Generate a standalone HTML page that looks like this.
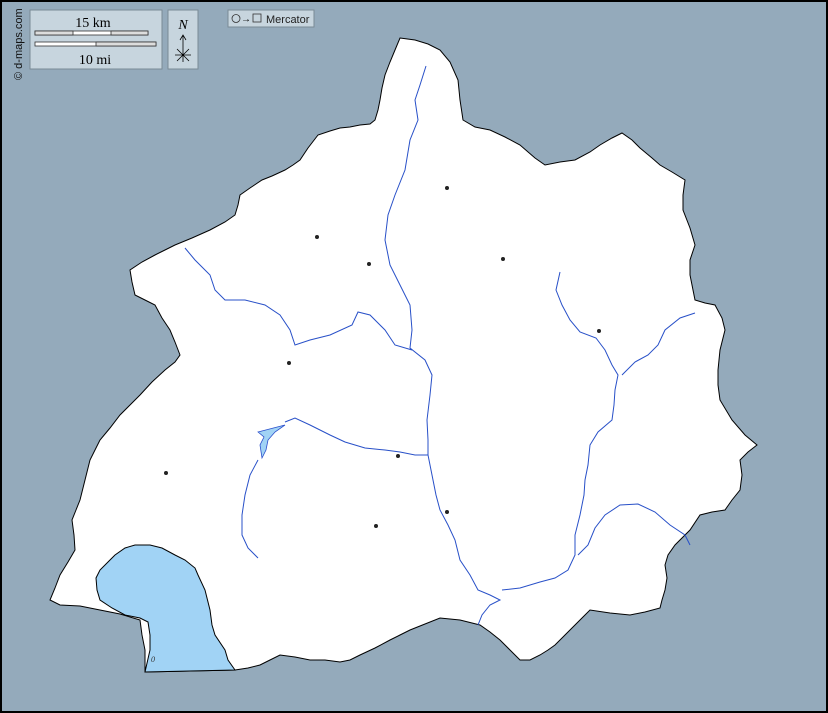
<!DOCTYPE html>
<html><head><style>
html,body{margin:0;padding:0;width:828px;height:713px;overflow:hidden;background:#94aabb}
svg{display:block}
text{font-family:"Liberation Serif",serif}
</style></head><body>
<svg width="828" height="713" viewBox="0 0 828 713">
<rect x="1" y="1" width="826" height="711" fill="#94aabb" stroke="#000" stroke-width="2"/>
<polygon fill="#fff" stroke="#000" stroke-width="1" points="400,38 415,40 428,44 440,50 450,62 458,80 460,100 463,120 475,127 490,130 505,137 520,145 535,158 545,165 560,162 575,160 590,152 600,145 612,138 622,133 632,140 640,148 652,158 660,165 672,172 685,180 683,195 683,210 690,228 695,245 690,260 690,275 693,290 695,300 705,303 715,305 722,318 725,330 720,350 718,370 718,385 720,400 732,420 745,435 757,445 748,452 740,460 742,475 740,490 732,500 725,510 712,512 700,515 690,530 675,545 668,555 665,565 667,578 665,590 662,600 660,608 645,612 630,615 610,613 590,610 582,618 575,625 565,635 555,645 548,650 540,655 530,660 520,660 510,650 500,640 490,632 480,625 460,620 440,618 425,624 410,630 400,635 390,640 375,648 360,655 350,660 340,662 325,660 310,660 295,657 280,655 270,660 260,665 248,668 235,670 145,672 145,650 142,635 140,620 120,614 100,610 80,606 60,605 50,600 55,588 60,575 68,562 75,550 74,535 72,520 76,510 80,500 85,480 90,460 95,450 100,440 110,428 120,415 130,405 140,395 152,382 165,370 175,362 180,355 175,342 170,330 162,318 155,305 145,300 135,295 132,282 130,270 142,262 155,255 165,250 175,245 192,238 210,230 225,222 235,215 238,205 240,195 250,188 262,180 272,176 285,170 293,165 300,160 308,148 318,135 330,131 340,128 350,127 360,125 370,124 375,120 378,110 380,100 382,88 385,75 390,62 395,50"/>
<polygon fill="#a1d3f5" stroke="#000" stroke-width="1" points="145,672 235,670 228,660 225,650 215,635 212,625 210,610 205,590 198,575 195,568 185,560 175,555 162,548 150,545 135,545 125,548 115,555 110,560 100,570 96,578 97,590 100,600 112,608 125,615 140,618 148,622 150,635 150,650"/>
<polygon fill="#a1d3f5" stroke="#2a4fcc" stroke-width="0.8" points="258,432 285,425 275,432 268,440 266,450 262,458 260,445 264,437"/>
<g fill="none" stroke="#2850c8" stroke-width="1">
<path d="M426,66 L420,85 L415,100 L418,120 L410,140 L405,170 L395,195 L388,215 L385,240 L390,265 L400,285 L410,305 L412,330 L410,348 L425,360 L432,375 L430,395 L427,420 L428,440 L428,455 L432,475 L436,495 L440,510 L448,525 L455,540 L460,560 L470,575 L478,590 L490,595 L500,600 L490,605 L482,615 L478,625"/>
<path d="M185,248 L195,260 L210,275 L215,290 L225,300 L245,300 L265,305 L280,315 L290,330 L295,345 L310,340 L330,335 L352,325 L358,312 L370,315 L385,330 L395,345 L412,350"/>
<path d="M285,422 L295,418 L310,425 L330,435 L345,442 L365,448 L385,450 L400,452 L415,455 L428,455"/>
<path d="M258,460 L250,475 L245,495 L242,515 L242,535 L248,548 L258,558"/>
<path d="M560,272 L556,290 L562,305 L570,320 L580,332 L596,338 L605,350 L612,365 L618,375 L615,390 L614,405 L612,420 L598,432 L590,445 L588,465 L585,480 L584,495 L580,515 L575,535 L575,555 L568,570 L555,578 L540,582 L520,588 L502,590"/>
<path d="M695,313 L680,318 L665,330 L658,345 L648,355 L635,362 L622,375"/>
<path d="M690,545 L685,535 L670,525 L655,512 L638,504 L620,505 L605,515 L595,528 L588,545 L578,555"/>
</g>
<g fill="#222">
<circle cx="447" cy="188" r="2"/><circle cx="317" cy="237" r="2"/><circle cx="369" cy="264" r="2"/>
<circle cx="503" cy="259" r="2"/><circle cx="599" cy="331" r="2"/><circle cx="289" cy="363" r="2"/>
<circle cx="166" cy="473" r="2"/><circle cx="398" cy="456" r="2"/><circle cx="447" cy="512" r="2"/>
<circle cx="376" cy="526" r="2"/>
</g>
<text x="151" y="662" font-size="8" font-style="italic" fill="#333">0</text>
<rect x="30" y="10" width="132" height="59" fill="#c7d5de" stroke="#7a8a96"/>
<text x="93" y="27" font-size="14" text-anchor="middle">15 km</text>
<rect x="35" y="31" width="113" height="4" fill="#fff" stroke="#333" stroke-width="0.8"/>
<rect x="35" y="31" width="38" height="4" fill="#ddd" stroke="#333" stroke-width="0.8"/>
<rect x="111" y="31" width="37" height="4" fill="#ddd" stroke="#333" stroke-width="0.8"/>
<rect x="35" y="42" width="121" height="4" fill="#fff" stroke="#333" stroke-width="0.8"/>
<rect x="96" y="42" width="60" height="4" fill="#ddd" stroke="#333" stroke-width="0.8"/>
<text x="95" y="64" font-size="14" text-anchor="middle">10 mi</text>
<rect x="168" y="10" width="30" height="59" fill="#c7d5de" stroke="#7a8a96"/>
<text x="183" y="29" font-size="14" font-style="italic" text-anchor="middle">N</text>
<g stroke="#000" stroke-width="0.8" fill="none"><path d="M183,62 L183,36 M180,40 L183,35 L186,40 M175,55 L191,55 M177,49 L189,61 M189,49 L177,61"/></g>
<rect x="228" y="10" width="86" height="17" fill="#c7d5de" stroke="#7a8a96"/>
<circle cx="236" cy="18.5" r="4" fill="none" stroke="#333" stroke-width="0.8"/>
<text x="241" y="22" font-size="10" font-family="Liberation Sans,sans-serif">→</text>
<rect x="253" y="14" width="8" height="8" fill="none" stroke="#333" stroke-width="0.8"/>
<text x="266" y="23" font-size="11" fill="#222" style="font-family:'Liberation Sans',sans-serif">Mercator</text>
<text transform="translate(22,80) rotate(-90)" font-size="11" fill="#111" style="font-family:'Liberation Sans',sans-serif">© d-maps.com</text>
</svg>
</body></html>
